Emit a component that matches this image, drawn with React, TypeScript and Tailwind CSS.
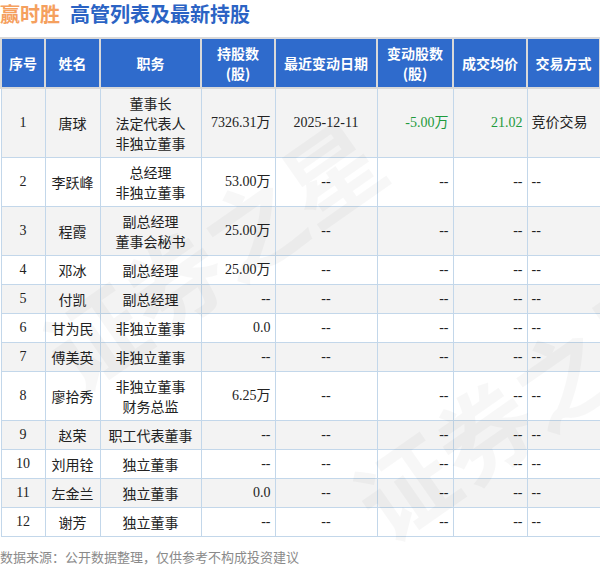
import React from "react"

type Row = {
  no: string
  name: string
  title: string[]
  shares: string
  date: string
  change: string
  price: string
  method: string
}

const rows: Row[] = [
  { no: "1", name: "唐球", title: ["董事长", "法定代表人", "非独立董事"], shares: "7326.31万", date: "2025-12-11", change: "-5.00万", price: "21.02", method: "竞价交易" },
  { no: "2", name: "李跃峰", title: ["总经理", "非独立董事"], shares: "53.00万", date: "--", change: "--", price: "--", method: "--" },
  { no: "3", name: "程霞", title: ["副总经理", "董事会秘书"], shares: "25.00万", date: "--", change: "--", price: "--", method: "--" },
  { no: "4", name: "邓冰", title: ["副总经理"], shares: "25.00万", date: "--", change: "--", price: "--", method: "--" },
  { no: "5", name: "付凯", title: ["副总经理"], shares: "--", date: "--", change: "--", price: "--", method: "--" },
  { no: "6", name: "甘为民", title: ["非独立董事"], shares: "0.0", date: "--", change: "--", price: "--", method: "--" },
  { no: "7", name: "傅美英", title: ["非独立董事"], shares: "--", date: "--", change: "--", price: "--", method: "--" },
  { no: "8", name: "廖拾秀", title: ["非独立董事", "财务总监"], shares: "6.25万", date: "--", change: "--", price: "--", method: "--" },
  { no: "9", name: "赵荣", title: ["职工代表董事"], shares: "--", date: "--", change: "--", price: "--", method: "--" },
  { no: "10", name: "刘用铨", title: ["独立董事"], shares: "--", date: "--", change: "--", price: "--", method: "--" },
  { no: "11", name: "左金兰", title: ["独立董事"], shares: "0.0", date: "--", change: "--", price: "--", method: "--" },
  { no: "12", name: "谢芳", title: ["独立董事"], shares: "--", date: "--", change: "--", price: "--", method: "--" },
]

const serif = { fontFamily: '"Liberation Serif", "Noto Sans CJK SC", serif' }
const sans = { fontFamily: '"Noto Sans CJK SC", sans-serif' }

function Watermark({ className }: { className: string }) {
  return (
    <div
      aria-hidden
      className={`pointer-events-none absolute select-none whitespace-nowrap text-[96px] font-bold text-black/[0.03] -rotate-[35deg] ${className}`}
      style={sans}
    >
      证券之星
    </div>
  )
}

export default function App() {
  const th = "border-2 border-[#d9d9d9] bg-[#2f6bcc] px-1 py-[4px] text-center text-[14px] font-bold leading-[20px] text-white"
  const td = "border border-[#c3d7ea] px-[4px] py-[4px] text-[14px] leading-[20px]"
  const green = (v: string) => (v !== "--" ? "text-[#1e9a3c]" : "text-[#222]")

  return (
    <div className="relative w-[600px] h-[568px] overflow-hidden bg-white" style={sans}>
      {/* Title */}
      <div className="flex h-[37px] items-start pt-[2px] text-[20px] font-bold leading-[24px]">
        <span className="text-[#f5a05e]">赢时胜</span>
        <span className="ml-[10px] text-[#2b63c4]">高管列表及最新持股</span>
      </div>

      <table className="w-[599px] table-fixed border-collapse">
        <colgroup>
          <col className="w-[44px]" />
          <col className="w-[55px]" />
          <col className="w-[101px]" />
          <col className="w-[74px]" />
          <col className="w-[102px]" />
          <col className="w-[76px]" />
          <col className="w-[74px]" />
          <col className="w-[73px]" />
        </colgroup>
        <thead>
          <tr>
            <th className={th}>序号</th>
            <th className={th}>姓名</th>
            <th className={th}>职务</th>
            <th className={th}>持股数<br />(股)</th>
            <th className={th}>最近变动日期</th>
            <th className={th}>变动股数<br />(股)</th>
            <th className={th}>成交均价</th>
            <th className={th}>交易方式</th>
          </tr>
        </thead>
        <tbody style={serif}>
          {rows.map((r, i) => (
            <tr key={r.no} className={i % 2 === 0 ? "bg-[#f3f3f3]" : "bg-white"}>
              <td className={`${td} text-center text-[#222]`}>{r.no}</td>
              <td className={`${td} text-center text-[#222]`} style={sans}>{r.name}</td>
              <td className={`${td} text-center text-[#222]`} style={sans}>
                {r.title.map((t) => (
                  <div key={t}>{t}</div>
                ))}
              </td>
              <td className={`${td} text-right text-[#222]`}>{r.shares}</td>
              <td className={`${td} text-center text-[#222]`}>{r.date}</td>
              <td className={`${td} text-right ${green(r.change)}`}>{r.change}</td>
              <td className={`${td} text-right ${green(r.price)}`}>{r.price}</td>
              <td className={`${td} text-left text-[#222]`}>{r.method}</td>
            </tr>
          ))}
        </tbody>
      </table>

      {/* Footer note */}
      <div className="mt-[11px] text-[13px] leading-[18px] text-[#8a8a8a]">
        数据来源：公开数据整理，仅供参考不构成投资建议
      </div>

      <Watermark className="left-[20px] top-[180px]" />
      <Watermark className="left-[330px] top-[330px]" />
    </div>
  )
}
